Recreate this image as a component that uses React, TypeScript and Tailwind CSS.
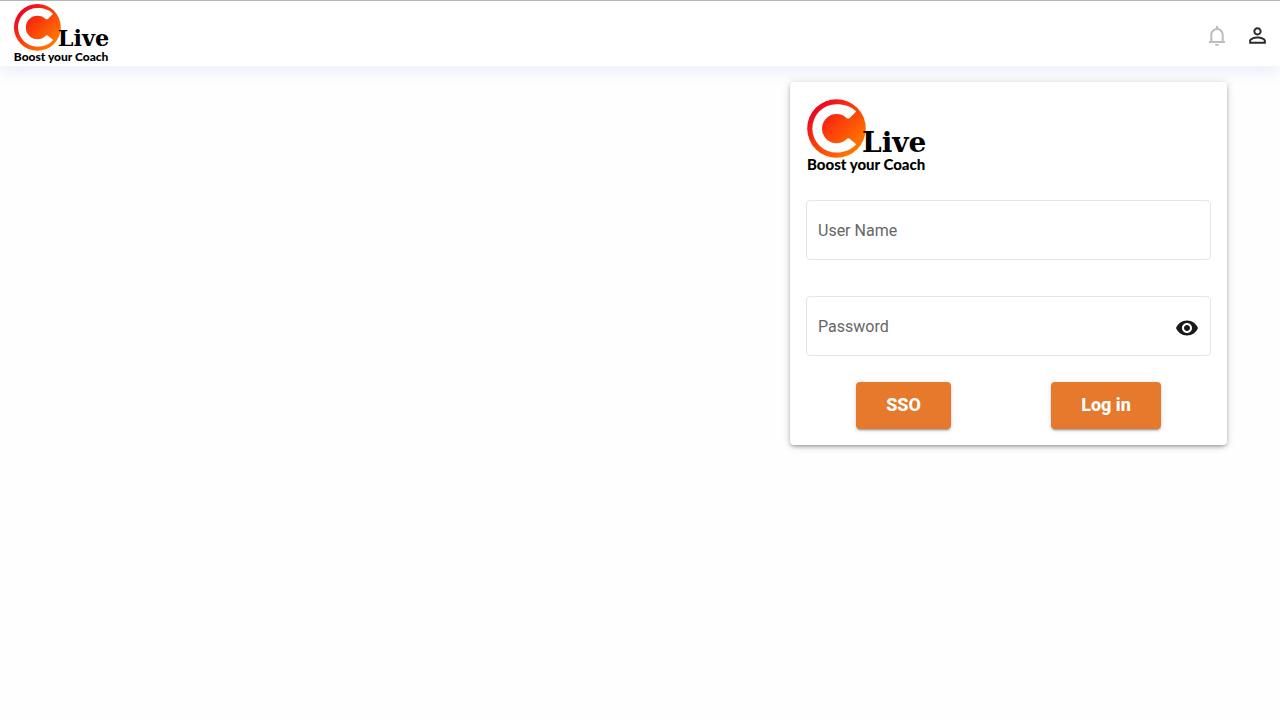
import { useState } from "react";
import { MdOutlineVisibilityOff, MdPersonOutline, MdVisibility } from "react-icons/md";

function Logo({ id, className }: { id: string; className: string }) {
  return (
    <svg viewBox="0 0 120 75" className={className} role="img" aria-label="C Live">
      <defs>
        <linearGradient id={id} x1="0" y1="0" x2="1" y2="1">
          <stop offset="0.12" stopColor="#ec0025" />
          <stop offset="0.45" stopColor="#fb3a0a" />
          <stop offset="0.8" stopColor="#ff7200" />
        </linearGradient>
      </defs>
      <circle cx="30.5" cy="30.5" r="29.3" fill={`url(#${id})`} />
      <path
        d="M50.2 13.5C45.5 8.6 38.5 6.2 30.5 6.2A24.2 24.2 0 0 0 30.5 54.6C38.5 54.6 45.5 51.8 50.2 46.3L43.3 40.6L41.3 40.6A14.6 14.6 0 1 1 41 20.4L43.3 20.4Z"
        fill="#fff"
      />
      <text x="56" y="54" fontSize="28" fontWeight="700" className="font-['DejaVu_Serif',serif]">
        Live
      </text>
      <text x="1" y="72" fontSize="15" fontWeight="900" className="font-['Lato',sans-serif]">
        Boost your Coach
      </text>
    </svg>
  );
}

function BellIcon() {
  return (
    <svg viewBox="0 0 24 24" className="size-6" fill="none" stroke="currentColor" strokeWidth="2">
      <path d="M4 18h16M6.3 18v-7.3a5.7 5.7 0 0 1 11.4 0v7.3M12 5V2" />
      <path d="M10 20h4a2 2 0 0 1-4 0Z" fill="currentColor" stroke="none" />
    </svg>
  );
}

const fieldClass =
  "h-[60px] w-full rounded border border-[#e6e6e6] bg-white px-[11px] text-base text-black outline-none placeholder:text-[#666] focus:border-[#e6792c]";

const buttonClass =
  "h-[47px] rounded bg-[#e6792c] px-[30px] pb-0.5 text-lg font-extrabold text-white shadow-[0_3px_1px_-2px_rgba(0,0,0,0.2),0_2px_2px_0_rgba(0,0,0,0.14),0_1px_5px_0_rgba(0,0,0,0.12)]";

export default function App() {
  const [showPassword, setShowPassword] = useState(false);

  return (
    <div className="min-h-screen bg-[#fefefe] font-['Roboto',sans-serif]">
      <header className="flex h-[66px] items-center justify-between border-t border-[#b5b5b5] bg-white pr-2.5 pl-[13px] shadow-[0_4px_16px_0_rgba(80,100,230,0.13)]">
        <a href="#" className="pb-0.5">
          <Logo id="header-logo" className="block w-24" />
        </a>
        <div className="flex items-center gap-4 pt-1">
          <button type="button" aria-label="Notifications" className="text-[#bdbdbd]">
            <BellIcon />
          </button>
          <button type="button" aria-label="Account" className="text-[#2b2b2b]">
            <MdPersonOutline className="size-[25px]" />
          </button>
        </div>
      </header>

      <main className="flex justify-end pt-4 pr-[53px] pl-4">
        <form
          className="w-full max-w-[437px] rounded bg-white p-4 shadow-[0_2px_4px_-1px_rgba(0,0,0,0.4),0_1px_10px_0_rgba(0,0,0,0.14)]"
          onSubmit={(e) => e.preventDefault()}
        >
          <Logo id="card-logo" className="w-[120px]" />
          <input
            type="text"
            aria-label="User Name"
            placeholder="User Name"
            className={`mt-[27px] ${fieldClass}`}
          />
          <div className="relative mt-9">
            <input
              type={showPassword ? "text" : "password"}
              aria-label="Password"
              placeholder="Password"
              className={`pr-12 ${fieldClass}`}
            />
            <button
              type="button"
              aria-label="Show password"
              className="absolute top-5 right-3 text-[#1a1a1a]"
              onClick={() => setShowPassword(!showPassword)}
            >
              {showPassword ? (
                <MdOutlineVisibilityOff className="size-6" />
              ) : (
                <MdVisibility className="size-6" />
              )}
            </button>
          </div>
          <div className="mt-[26px] flex justify-around">
            <button type="button" className={buttonClass}>
              SSO
            </button>
            <button type="submit" className={buttonClass}>
              Log in
            </button>
          </div>
        </form>
      </main>
    </div>
  );
}
